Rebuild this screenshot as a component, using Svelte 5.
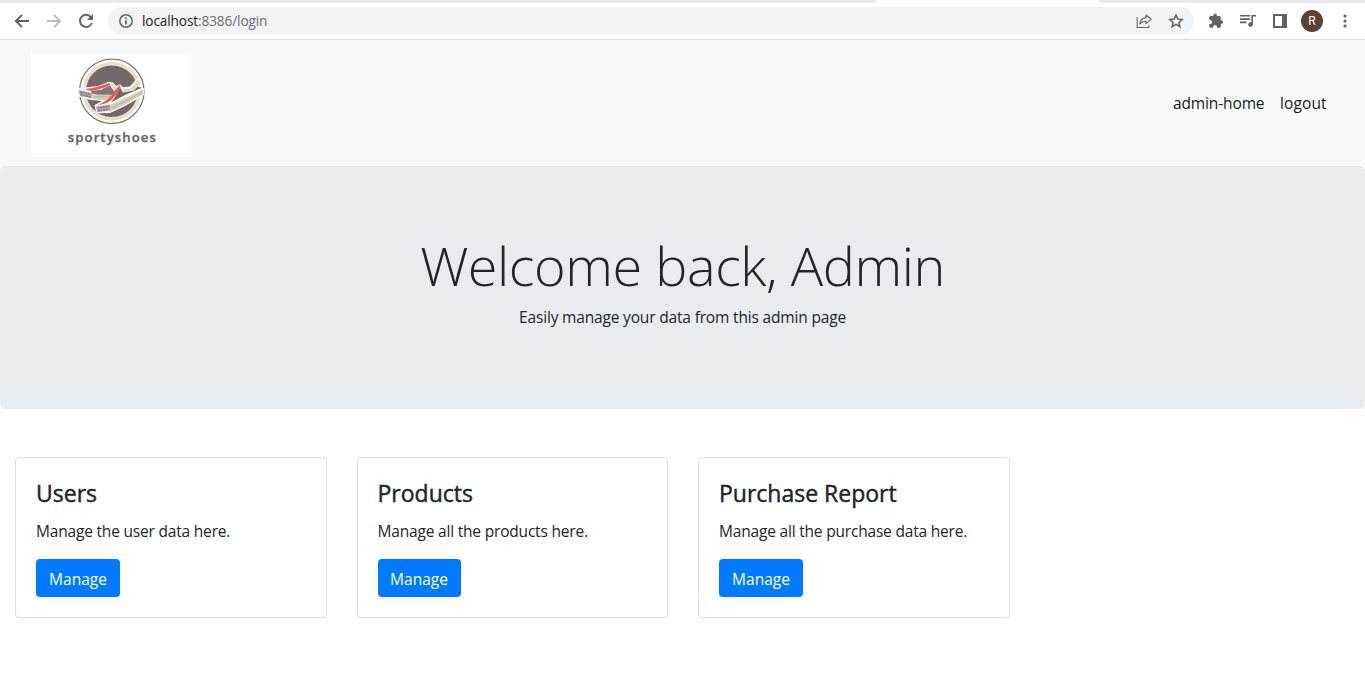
<script>
  const cards = [
    { title: 'Users', text: 'Manage the user data here.', cls: 'users' },
    { title: 'Products', text: 'Manage all the products here.', cls: 'products' },
    { title: 'Purchase Report', text: 'Manage all the purchase data here.', cls: 'report' }
  ];
</script>

<div class="page">
  <header class="browser">
    <div class="tabs"><span class="tab left"></span><span class="tab right"></span></div>
    <div class="toolbar">
      <svg class="icon back" viewBox="0 0 16 16"><path d="M15 8H2M8 1.8L1.8 8L8 14.2" fill="none" stroke="#5f6368" stroke-width="1.9"/></svg>
      <svg class="icon forward" viewBox="0 0 16 16"><path d="M1 8H14M8 1.8L14.2 8L8 14.2" fill="none" stroke="#babcbe" stroke-width="1.9"/></svg>
      <svg class="icon reload" viewBox="0 0 16 16"><path d="M13.1 4.3A6.1 6.1 0 1 0 13.8 10" fill="none" stroke="#5f6368" stroke-width="2"/><path d="M15 .9V7H8.9z" fill="#5f6368"/></svg>
      <div class="address">
        <svg class="info" viewBox="0 0 14 14"><circle cx="7" cy="7" r="6.2" fill="none" stroke="#5f6368" stroke-width="1.5"/><path d="M7 6v4.5M7 3.4v1.7" stroke="#5f6368" stroke-width="1.7"/></svg>
        <span class="url"><b>localhost</b>:8386/login</span>
        <svg class="share" viewBox="0 0 16 16"><path d="M1.2 4V14.5H12.8V12.3" fill="none" stroke="#5f6368" stroke-width="1.1"/><path d="M10 2L15.2 6.3L10 10.6V8.2C7.2 8.2 5.2 9 3.8 11C4.3 7.2 6.4 5 10 4.6z" fill="none" stroke="#5f6368" stroke-width="1.1" stroke-linejoin="round"/></svg>
        <svg class="star" viewBox="0 0 16 16"><path d="M8 2L9.8 6.1L14.2 6.5L10.9 9.4L11.9 13.7L8 11.4L4.1 13.7L5.1 9.4L1.8 6.5L6.2 6.1z" fill="none" stroke="#5f6368" stroke-width="1.5"/></svg>
      </div>
      <svg class="tool" viewBox="0 0 16 16"><path d="M13.5 7.2H12.8V4.4C12.8 3.6 12.2 3 11.4 3H8.9V2.3A1.8 1.8 0 0 0 5.3 2.3V3H2.7C1.9 3 1.3 3.6 1.3 4.4V7H2.1A1.95 1.95 0 0 1 2.1 10.9H1.3V13.3C1.3 14.1 1.9 14.7 2.7 14.7H5.1V14A1.95 1.95 0 0 1 9 14V14.7H11.4C12.2 14.7 12.8 14.1 12.8 13.3V10.8H13.5A1.8 1.8 0 0 0 13.5 7.2z" fill="#5f6368"/></svg>
      <svg class="tool" viewBox="0 0 16 16"><path d="M0 2.8H10.2M0 6.1H10.2M0 9.4H6.4M12.1 11.5V2.8H16" fill="none" stroke="#5f6368" stroke-width="1.6"/><circle cx="10.5" cy="11.6" r="2.3" fill="#5f6368"/></svg>
      <svg class="tool" viewBox="0 0 16 16"><path d="M1 1h14v14H1zM3 3v10h7V3z" fill="#5f6368" fill-rule="evenodd"/></svg>
      <span class="avatar">R</span>
      <svg class="dots" viewBox="0 0 4 16"><g fill="#5f6368"><circle cx="2" cy="3" r="1.55"/><circle cx="2" cy="8" r="1.55"/><circle cx="2" cy="13" r="1.55"/></g></svg>
    </div>
  </header>

  <nav>
    <svg class="logo" viewBox="0 0 160 100">
      <rect width="160" height="100" fill="#fff"/>
      <circle cx="80.8" cy="38.3" r="32.2" fill="#fff" stroke="#83787b" stroke-width="1.3"/>
      <circle cx="80.8" cy="38.3" r="27.6" fill="#75686b" stroke="#e8e1c6" stroke-width="3.6"/>
      <path d="M46.3 35L54 34.6L67 33L78 28.8L82 29.6L85.5 33L89 31.2L92 34.2L99 33.5L106 25.5L111 29L110 33L113.5 36L113 42L94 53L79 60L65 60.3L63.5 52L71 48L60 47L48 44z" fill="#fcfaf4"/>
      <path d="M60 38L70 36.7L79 32.3L83 38L88 33.5L84 41L78 44L61 40.7z" fill="#83777a"/>
      <path d="M89 34.5L91.5 39L102.5 37.2L107 33.5L110.5 35L94 42L80 49.5L84.5 43z" fill="#75686b"/>
      <path d="M79 30.3L82 30.8L86.5 35L84 38.8zM88.8 32.2L92 36L100 35.2L106.6 26.8L109.8 30L102.8 37.6L92 39.7z" fill="#d9dcc1"/>
      <path d="M61 41.5L82.5 41.8L77.5 47.2L61.5 46.2zM79 52L112 36.5L112.3 40.9L94 51.5L79 58.5z" fill="#cdd0b7"/>
      <path d="M63 44L80 43.5M81 55L110 40" stroke="#aaa993" stroke-width=".7" fill="none"/>
      <path d="M53.5 36Q66 35 78 30.1L79.5 31.6Q73 36 60 38zM88.5 32.2L89.7 34Q86 41 81 46.5Q76 51 67 52L71 50Q77 47 81.5 41.5Q84 37.5 88.5 32.2z" fill="#e95a50"/>
      <path d="M47.5 37L61 40L60.7 45.5L49 43zM65 53.5L79 51.6L79 57.6L66 59.3z" fill="#b4adac"/>
      <path d="M49 39L60 41.5M49.7 41.7L60 44M66.5 55L78 53.5M67 57.7L78.5 55.9" stroke="#7a7074" stroke-width="1.2" stroke-dasharray="2 .7"/>
      <text x="36.8" y="88.5" textLength="88" lengthAdjust="spacing">sportyshoes</text>
    </svg>
    <div class="links"><a class="home" href="#home">admin-home</a><a class="out" href="#logout">logout</a></div>
  </nav>

  <section class="hero">
    <h1>Welcome back, Admin</h1>
    <p>Easily manage your data from this admin page</p>
  </section>

  <main>
    {#each cards as card}
      <article class={card.cls}>
        <h2>{card.title}</h2>
        <p>{card.text}</p>
        <button>Manage</button>
      </article>
    {/each}
  </main>
</div>

<style>
  :global(body) { margin: 0; background: #fff; overflow: hidden; }
  .page { height: 673px; overflow: hidden; font: 15.5px/24px "Open Sans", "Noto Sans", sans-serif; color: #212529; }
  svg { display: block; flex: none; }
  * { box-sizing: border-box; }
  .browser { height: 40px; border-bottom: 1px solid #dadce0; background: #fff; }
  .tabs { height: 3px; display: flex; justify-content: space-between; }
  .tab { background: #e8eaed; }
  .left { width: 877px; border-bottom-right-radius: 5px 3px; }
  .right { width: 267px; border-bottom-left-radius: 5px 3px; }
  .toolbar { height: 36px; display: flex; align-items: center; padding-left: 14px; }
  .icon { width: 16px; height: 16px; margin-right: 16px; }
  .reload { margin-right: 14px; }
  .address { width: 1086px; height: 28px; border-radius: 14px; background: #f1f3f4; display: flex; align-items: center; padding: 0 10px 0 11px; margin-right: 14px; }
  .info { width: 14px; height: 14px; margin-right: 9px; }
  .url { flex: 1; font: 13.6px/20px "Open Sans", sans-serif; color: #6b6f73; letter-spacing: -.1px; }
  .url b { font-weight: 400; color: #202124; }
  .share, .star, .tool { width: 16px; height: 16px; }
  .share { margin-right: 16px; }
  .star { margin-right: 0; }
  .tool { margin-right: 16px; }
  .avatar { width: 22px; height: 22px; border-radius: 50%; background: #5d4037; color: #fff; font: 12px/22px Roboto, sans-serif; text-align: center; margin: 0 20px 0 -3px; flex: none; }
  .dots { width: 4px; height: 16px; }
  nav { height: 126px; background: #f8f9fb; display: flex; align-items: center; justify-content: space-between; padding: 0 38px 0 31px; }
  .logo { width: 160px; height: 100px; }
  .logo text { font: 600 13.2px "Open Sans", sans-serif; fill: #6b5f62; stroke: #6b5f62; stroke-width: .3; }
  .links { display: flex; gap: 16px; }
  a { color: #17191b; text-decoration: none; white-space: nowrap; }
  .home { width: 91px; letter-spacing: -.13px; }
  .out { width: 47px; letter-spacing: .1px; }
  .hero { height: 243px; background: #e9ecef; border-radius: 5px; text-align: center; padding-top: 66px; }
  h1, h2, p { margin: 0; white-space: nowrap; }
  h1 { font-weight: 300; font-size: 54px; line-height: 67px; margin-bottom: 6px; letter-spacing: -.45px; }
  p { letter-spacing: -.17px; }
  main { display: grid; grid-template-columns: repeat(3, 311.5px); gap: 30px; padding: 48px 15px 0; }
  article { height: 161px; border: 1px solid #dfdfdf; border-radius: 4px; padding: 20px; }
  h2 { font-size: 23px; font-weight: 400; line-height: 29px; margin: 1px 0 11px; letter-spacing: 0; -webkit-text-stroke: .45px #212529; }
  article p { margin-bottom: 16px; line-height: 24px; letter-spacing: -.19px; }
  button { width: 84px; height: 38px; border: 0; border-radius: 4px; background: #007bff; color: #fff; font: 15.5px/24px "Open Sans", sans-serif; padding: 2px 0 0; display: block; }
  .products button { width: 83px; }
</style>
